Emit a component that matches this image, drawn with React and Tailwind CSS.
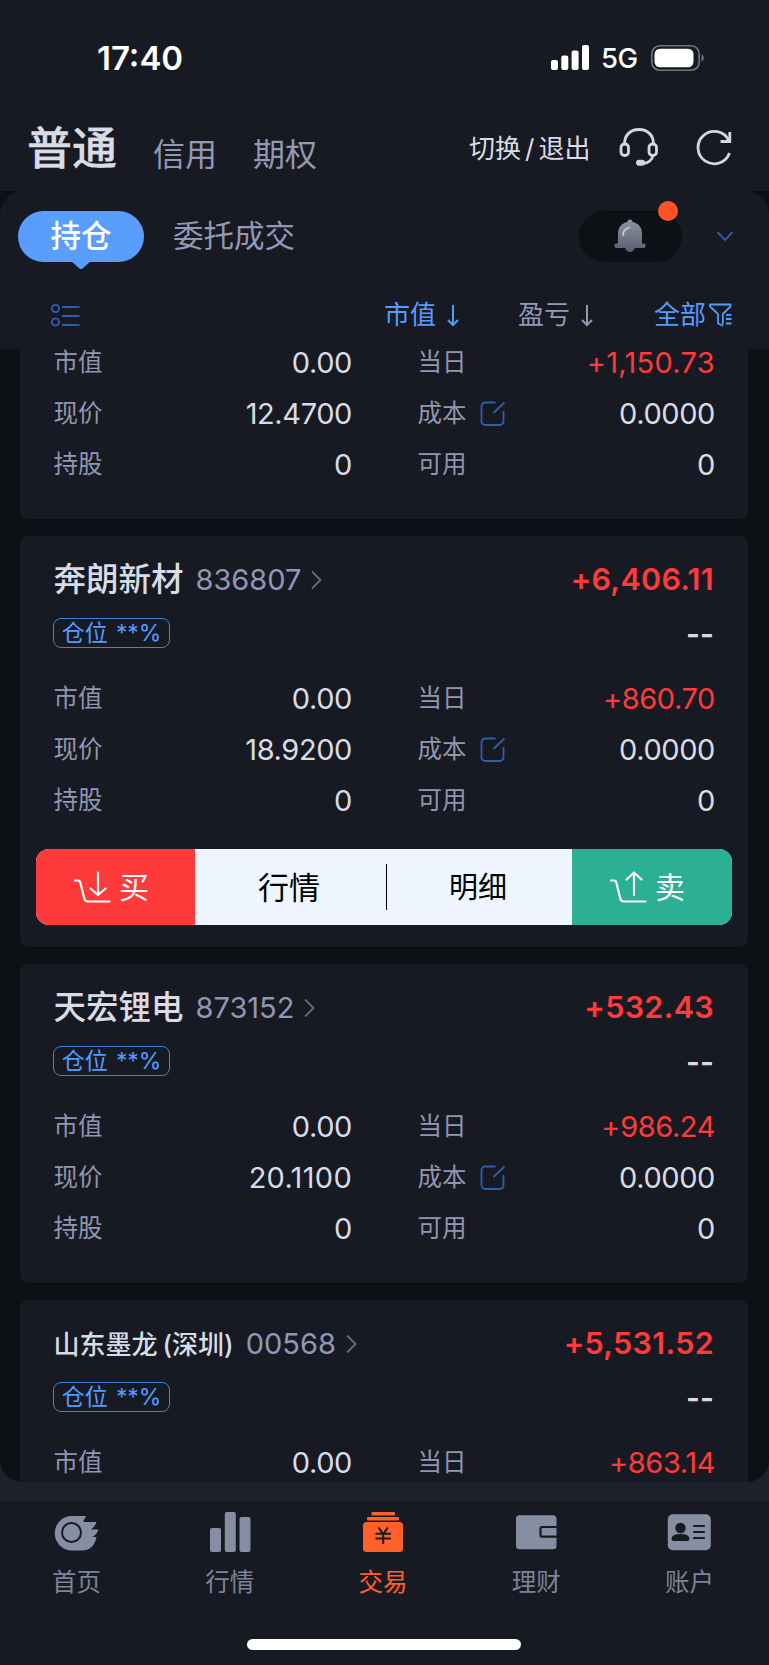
const positions = [
  { name: "", code: "", profit: "", today: "+1,150.73", price: "12.4700", first: true },
  { name: "奔朗新材", code: "836807", profit: "+6,406.11", today: "+860.70", price: "18.9200", open: true },
  { name: "天宏锂电", code: "873152", profit: "+532.43", today: "+986.24", price: "20.1100" },
  { name: "山东墨龙", market: "(深圳)", code: "00568", profit: "+5,531.52", today: "+863.14", last: true },
];

function StatusBar() {
  return (
    <div className="flex h-[115px] items-center justify-between pl-[97px] pr-[64px] text-white">
      <span className="mt-[1px] text-[33px] font-semibold leading-none">17:40</span>
      <div className="flex items-center">
        <svg width="38" height="25" viewBox="0 0 38 25" fill="#fff">
          <rect x="0" y="15" width="7" height="10" rx="2" />
          <rect x="10.3" y="10.5" width="7" height="14.5" rx="2" />
          <rect x="20.6" y="5.5" width="7" height="19.5" rx="2" />
          <rect x="31" y="0" width="7" height="25" rx="2" />
        </svg>
        <span className="ml-3 mt-[2px] w-[38px] text-[27.5px] font-medium leading-none tracking-[-0.6px]">5G</span>
        <svg className="ml-3" width="54" height="26" viewBox="0 0 54 26">
          <rect x="0.8" y="0.8" width="47.4" height="24.4" rx="8" fill="none" stroke="#74767c" strokeWidth="1.6" />
          <rect x="3.5" y="3.7" width="39" height="18.6" rx="5.5" fill="#fff" />
          <path d="M50.5 9.5c3 1 3 6 0 7z" fill="#74767c" />
        </svg>
      </div>
    </div>
  );
}

function Header() {
  return (
    <div className="flex h-[76px] items-start pl-[27px] text-[#9498b5]">
      <span className="mt-[11px] w-[126px] text-[45px] font-medium leading-none text-[#d9dce6] [-webkit-text-stroke:0.3px_#d9dce6]">普通</span>
      <span className="mt-[24px] w-[100px] text-[32px] leading-none">信用</span>
      <span className="mt-[24px] w-[216px] text-[32px] leading-none">期权</span>
      <span className="mt-[21px] w-[150px] text-[26px] leading-none text-[#d9dce6]">
        切换<span className="px-[4px]">/</span>退出
      </span>
      <svg className="mt-[12px]" width="40" height="40" viewBox="0 0 40 40" fill="none" stroke="#d3d7e4" strokeWidth="2.8" strokeLinecap="round">
        <path d="M5.5 17C5.5 8 11.5 2.5 20 2.5S34.5 8 34.5 17" />
        <rect x="2" y="17" width="7.5" height="11.5" rx="3.5" />
        <rect x="30" y="17" width="7.5" height="11.5" rx="3.5" />
        <path d="M34 28.500C33 33 29 36 24 36.500" />
        <rect x="18" y="33.8" width="7" height="4" rx="2" fill="#d3d7e4" strokeWidth="2" />
      </svg>
      <svg className="ml-[36px] mt-[13px]" width="38" height="38" viewBox="0 0 38 38" fill="none" stroke="#d3d7e4" strokeWidth="2.8">
        <path d="M33.8 12.5A16.2 16.2 0 1 0 34.5 25" />
        <path d="M34.8 4v9.500H25.500" />
      </svg>
    </div>
  );
}

function ArrowDown() {
  return (
    <svg className="mt-[1px]" width="12" height="22" viewBox="0 0 12 22" fill="none" stroke="currentColor" strokeWidth="2">
      <path d="M6 0v20M1 15l5 5 5-5" />
    </svg>
  );
}

function Toolbar() {
  return (
    <div className="bg-[#0d1014]">
      <div className="h-[158px] rounded-t-[24px] bg-[#171a22]">
        <div className="flex h-[90px] items-center pl-[18px]">
          <div className="relative flex h-[51px] w-[126px] items-center justify-center rounded-full bg-[#599dfd] text-[30.5px] leading-none text-white">
            <span className="mt-[1px] font-medium">持仓</span>
            <svg className="absolute left-[53px] top-[50px]" width="20" height="9" viewBox="0 0 20 9" fill="#599dfd">
              <path d="M0 0h20l-8.500 7.500q-1.500 1-3 0z" />
            </svg>
          </div>
          <span className="ml-[29px] mt-[1px] w-[406px] text-[30.5px] leading-none text-[#9498b5]">委托成交</span>
          <div className="relative flex h-[51px] w-[103px] items-center justify-center rounded-full bg-[#0d1014]">
            <svg className="mr-[1px]" width="32" height="34" viewBox="0 0 32 34">
              <defs>
                <linearGradient id="bell" x1="0" y1="0" x2="0" y2="1">
                  <stop offset="0" stopColor="#8f95a3" />
                  <stop offset="1" stopColor="#565d6f" />
                </linearGradient>
              </defs>
              <path d="M13.5 3a2.5 2.5 0 0 1 5 0C24.500 4 28 9 28 14v10.500h1.500a2.200 2.200 0 0 1 0 4.500H21q-1.500 4-5 4t-5-4H2.500a2.200 2.200 0 0 1 0-4.500H4V14C4 9 7.500 4 13.500 3z" fill="url(#bell)" />
              <path d="M9 16q0-5 6-7.500" fill="none" stroke="#d0cfcd" strokeWidth="1.8" strokeLinecap="round" />
            </svg>
            <span className="absolute left-[79px] top-[-10px] h-5 w-5 rounded-full bg-[#ff5327]"></span>
          </div>
          <svg className="ml-[34px]" width="18" height="11" viewBox="0 0 18 11" fill="none" stroke="#2f60ba" strokeWidth="1.8">
            <path d="M1.500 1.200L9 9l7.500-7.800" />
          </svg>
        </div>

        <div className="flex h-[68px] items-center pl-[51px] text-[26px] leading-none text-[#9498b5]">
          <svg className="mr-[304px]" width="29" height="23" viewBox="0 0 29 23" fill="none" stroke="#2f5dad" strokeWidth="1.9">
            <circle cx="4.5" cy="4.5" r="3.6" />
            <circle cx="4.5" cy="18" r="3.6" />
            <path d="M11 3h17.500M11 12h17.500M11 21h17.500" />
          </svg>
          <div className="flex w-[134px] items-center gap-[11px] text-[#559cff]">
            市值 <ArrowDown />
          </div>
          <div className="flex w-[136px] items-center gap-[11px]">
            盈亏 <ArrowDown />
          </div>
          <div className="flex items-center gap-[3px] text-[#559cff]">
            全部
            <svg width="23" height="24" viewBox="0 0 23 24" fill="none" stroke="currentColor" strokeWidth="1.8">
              <path d="M13.500 21.500v1L9 20.500V11L1 3.500V1.500h20.500v2L13.800 11v10" strokeLinejoin="round" />
              <path d="M17 11.800h5.500M17 16h5.500M17 20.500h5.500" />
            </svg>
          </div>
        </div>
      </div>
    </div>
  );
}

function Row({ label, value, icon, red, wide }) {
  return (
    <div className="flex h-[51px] items-center leading-none text-[#9296b1]">
      <span className="pl-[0.5px] text-[24.5px]">{label}</span>
      {icon && (
        <svg className="ml-[13px]" width="26" height="25" viewBox="0 0 26 25" fill="none" stroke="#2f5dad" strokeWidth="1.8">
          <path d="M15.500 1.500H5a3.500 3.500 0 0 0-3.500 3.500v15.500A3.500 3.500 0 0 0 5 24h15a3.500 3.500 0 0 0 3.500-3.500V10" />
          <path d="M13.500 12L24.500 1.500" />
        </svg>
      )}
      <span
        className={`ml-auto text-[29px] ${red ? "text-[#ff3a3a]" : "text-[#d9dce6]"} ${wide ? "tracking-[0.3px]" : "tracking-[-0.4px]"}`}
      >
        {value}
      </span>
    </div>
  );
}

function Basket({ up }) {
  return (
    <svg width="37" height="32" viewBox="0 0 37 32" fill="none" stroke="#fff" strokeWidth="2.2" strokeLinecap="round" strokeLinejoin="round">
      <path d="M1 9.500h3q1.800 0 2.300 2l4 16q.8 3 3.500 3H35.500" />
      {up ? <path d="M24 24V1.500M16.500 8.500l7.500-7 7.500 7" /> : <path d="M24 1.500V24M16.500 17.500l7.500 6.500 7.500-6.500" />}
    </svg>
  );
}

function Actions() {
  return (
    <div className="-mx-[17px] mt-[23px] flex h-[76px] overflow-hidden rounded-[13px] bg-[#eef5ff] text-[30px] leading-none text-black">
      <div className="flex w-[159px] items-center gap-[8px] bg-[#ff3a3a] pl-[38px] text-white">
        <Basket /> 买
      </div>
      <div className="flex w-[191px] items-center justify-center pr-[3px] text-[31px]">行情</div>
      <div className="h-[46px] w-px self-center bg-black"></div>
      <div className="flex flex-1 items-center justify-center pr-[3px] text-[29px]">明细</div>
      <div className="flex w-[160px] items-center gap-[8px] bg-[#2baf95] pl-[38px] text-white">
        <Basket up /> 卖
      </div>
    </div>
  );
}

function CardHead({ item }) {
  return (
    <>
      <div className="flex h-[87px] items-center leading-none">
        <span className={`${item.market ? "text-[26px]" : "text-[32.5px]"} mt-[2px] flex gap-[5px] pl-[0.5px] font-medium text-[#d9dce6]`}>
          {item.name}
          {item.market && <span>{item.market}</span>}
        </span>
        <span className="ml-[12px] text-[29px] text-[#9296b5]">{item.code}</span>
        <svg className="ml-[10px]" width="11" height="20" viewBox="0 0 11 20" fill="none" stroke="#666b88" strokeWidth="1.8">
          <path d="M1 1.500l8.500 8.500L1 18.500" />
        </svg>
        <span className="ml-auto mr-[1px] text-[30.5px] font-semibold tracking-[0.3px] text-[#ff3a3a]">{item.profit}</span>
      </div>
      <div className="flex h-[44px] items-start justify-between border-b border-[#12151b]">
        <span className="mt-[-5px] flex h-[30px] w-[117px] items-center justify-center rounded-[8px] border border-[#4380d6] pt-[1px] text-[23px] leading-none tracking-[-0.1px] text-[#559cff] [word-spacing:2px]">
          仓位 **%
        </span>
        <span className="mr-[1px] mt-[-1px] text-[30px] font-semibold leading-[24px] text-[#d9dce6]">--</span>
      </div>
    </>
  );
}

function Card({ item }) {
  let height = "h-[319px] rounded-[8px]";
  if (item.first) height = "h-[170px] rounded-b-[8px]";
  if (item.open) height = "h-[411px] rounded-[8px]";
  if (item.last) height = "h-[182px] rounded-t-[8px]";

  return (
    <div className={`${height} shrink-0 bg-[#171a22] px-[33px]`}>
      {!item.first && <CardHead item={item} />}
      <div className={`${item.first ? "-mt-[12px]" : "pt-[6px]"} grid grid-cols-[299px_298px] gap-x-[65px]`}>
        <Row label="市值" value="0.00" />
        <Row label="当日" value={item.today} red wide={item.first} />
        {!item.last && (
          <>
            <Row label="现价" value={item.price} wide={item.price === "20.1100"} />
            <Row label="成本" value="0.0000" icon />
            <Row label="持股" value="0" />
            <Row label="可用" value="0" />
          </>
        )}
      </div>
      {item.open && <Actions />}
    </div>
  );
}

function HomeIcon() {
  return (
    <svg width="48" height="40" viewBox="0 0 48 40" fill="#868ea2">
      <path d="M19 4h14l-3 6h13.500q-1 4-5.500 7.500h7.500q-1.500 4.500-6 7.500h4c-1.500 8-6 13.500-14 13.500H19A17.200 17.200 0 0 1 19 4z" />
      <circle cx="18.5" cy="20.5" r="9.5" fill="none" stroke="#171a22" strokeWidth="2" />
    </svg>
  );
}

function QuoteIcon() {
  return (
    <svg width="48" height="40" viewBox="0 0 48 40" fill="#868ea2">
      <rect x="4" y="16" width="11" height="24" rx="2" />
      <rect x="18.8" y="0" width="11" height="40" rx="2" />
      <rect x="33.5" y="5" width="11" height="35" rx="2" />
    </svg>
  );
}

function TradeIcon() {
  return (
    <svg width="48" height="40" viewBox="0 0 48 40" fill="#ff6029">
      <rect x="12.5" y="0" width="23.5" height="3.5" rx="1" />
      <rect x="8" y="5" width="32" height="3.5" rx="1" />
      <rect x="4" y="10" width="40" height="30" rx="3.5" />
      <path d="M19.500 15.500l4.700 6.500 4.700-6.500M24.200 22V32M16.500 21.800h15.500M16.500 26.500h15.500" fill="none" stroke="#171a22" strokeWidth="2" />
    </svg>
  );
}

function WalletIcon() {
  return (
    <svg width="48" height="40" viewBox="0 0 48 40" fill="#868ea2">
      <rect x="4" y="3.3" width="40.5" height="34" rx="3.5" />
      <path d="M45 15H30q-1.500 0-1.500 1.500V23q0 1.700 1.500 1.700H45" fill="none" stroke="#171a22" strokeWidth="2.2" />
    </svg>
  );
}

function AccountIcon() {
  return (
    <svg width="48" height="40" viewBox="0 0 48 40" fill="#171a22">
      <rect x="2.8" y="2.3" width="43" height="36" rx="5" fill="#868ea2" />
      <circle cx="15.5" cy="16" r="5.2" />
      <path d="M6.500 27q0-5 9-5t9 5q0 2-2.500 2H9q-2.500 0-2.500-2z" />
      <path d="M29 14h10M29 20h10M29 26h10" stroke="#171a22" strokeWidth="2.2" strokeLinecap="round" />
    </svg>
  );
}

const tabs = [
  { label: "首页", icon: HomeIcon },
  { label: "行情", icon: QuoteIcon },
  { label: "交易", icon: TradeIcon, active: true },
  { label: "理财", icon: WalletIcon },
  { label: "账户", icon: AccountIcon },
];

export default function App() {
  return (
    <div className="flex h-[1665px] w-[769px] flex-col overflow-hidden bg-[#171a22] font-['Inter','Noto_Sans_CJK_SC',sans-serif]">
      <StatusBar />
      <Header />
      <Toolbar />

      {/* Positions */}
      <div className="bg-[#1d212c] pb-[19px]">
        <div className="flex h-[1133px] flex-col gap-[17px] overflow-hidden rounded-b-[22px] bg-[#0d1014] pl-[20px] pr-[21px]">
          {positions.map((item) => (
            <Card key={item.code} item={item} />
          ))}
        </div>
      </div>

      {/* Tab bar */}
      <div className="flex w-[766px] pt-[11px]">
        {tabs.map((t) => (
          <div key={t.label} className="flex flex-1 flex-col items-center">
            <t.icon />
            <span className={`mt-[18px] text-[24.5px] leading-none ${t.active ? "text-[#ff6029]" : "text-[#7c8499]"}`}>
              {t.label}
            </span>
          </div>
        ))}
      </div>
      <div className="mb-[15px] ml-[247px] mt-auto h-[11px] w-[274px] rounded-full bg-white"></div>
    </div>
  );
}
